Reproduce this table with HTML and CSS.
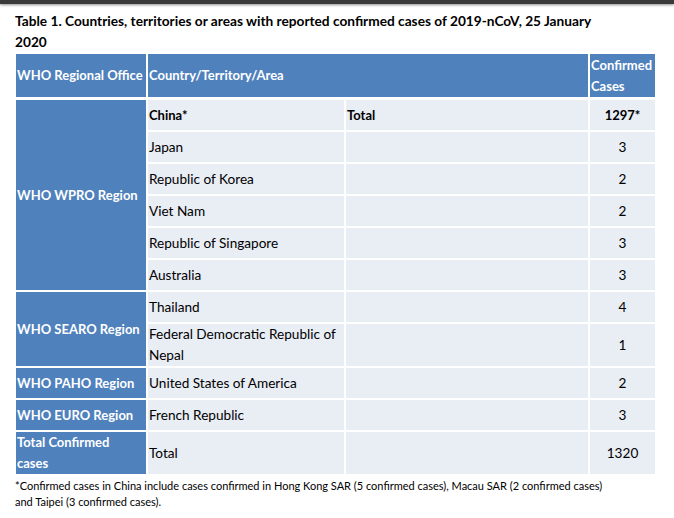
FILE: index.html
```html
<!DOCTYPE html>
<html>
<head>
<meta charset="utf-8">
<link rel="stylesheet" href="styles.css">
</head>
<body>
<div class="topbar"></div>
<div class="page">
  <h1 class="title">Table 1. Countries, territories or areas with reported confirmed cases of 2019-nCoV, 25 January<br>2020</h1>
  <table class="cases">
    <colgroup>
      <col class="c1"><col class="c2"><col class="c3"><col class="c4">
    </colgroup>
    <thead>
      <tr>
        <th class="head">WHO Regional Office</th>
        <th class="head" colspan="2">Country/Territory/Area</th>
        <th class="head">Confirmed Cases</th>
      </tr>
    </thead>
    <tbody>
      <tr>
        <td class="region" rowspan="6">WHO WPRO Region</td>
        <td class="cell bold">China*</td>
        <td class="cell bold">Total</td>
        <td class="cell num bold">1297*</td>
      </tr>
      <tr><td class="cell">Japan</td><td class="cell"></td><td class="cell num">3</td></tr>
      <tr><td class="cell">Republic of Korea</td><td class="cell"></td><td class="cell num">2</td></tr>
      <tr><td class="cell">Viet Nam</td><td class="cell"></td><td class="cell num">2</td></tr>
      <tr><td class="cell">Republic of Singapore</td><td class="cell"></td><td class="cell num">3</td></tr>
      <tr><td class="cell">Australia</td><td class="cell"></td><td class="cell num">3</td></tr>
      <tr>
        <td class="region" rowspan="2">WHO SEARO Region</td>
        <td class="cell">Thailand</td><td class="cell"></td><td class="cell num">4</td>
      </tr>
      <tr><td class="cell">Federal Democratic Republic of Nepal</td><td class="cell"></td><td class="cell num">1</td></tr>
      <tr>
        <td class="region">WHO PAHO Region</td>
        <td class="cell">United States of America</td><td class="cell"></td><td class="cell num">2</td>
      </tr>
      <tr>
        <td class="region">WHO EURO Region</td>
        <td class="cell">French Republic</td><td class="cell"></td><td class="cell num">3</td>
      </tr>
      <tr>
        <td class="region">Total Confirmed<br>cases</td>
        <td class="cell">Total</td><td class="cell"></td><td class="cell num">1320</td>
      </tr>
    </tbody>
  </table>
  <p class="note">*Confirmed cases in China include cases confirmed in Hong Kong SAR (5 confirmed cases), Macau SAR (2 confirmed cases) and Taipei (3 confirmed cases).</p>
</div>
</body>
</html>
```

FILE: styles.css
```css
html, body {
  margin: 0;
  padding: 0;
  background: #ffffff;
}

body {
  font-family: "Lato", "Open Sans", sans-serif;
  color: #000000;
}

.topbar {
  height: 4px;
  background: #3a3a3a;
  box-shadow: 0 1px 3px rgba(0, 0, 0, 0.45);
}

.page {
  padding: 6px 0 0 15px;
}

.title {
  margin: 0 0 2px 0;
  font-size: 13.7px;
  font-weight: 700;
  line-height: 21px;
}

.cases {
  margin-left: 1px;
  border-collapse: separate;
  border-spacing: 0;
  table-layout: fixed;
  width: 641px;
  font-size: 13.6px;
  line-height: 21px;
}

.c1 { width: 132px; }
.c2 { width: 198px; }
.c3 { width: 244px; }
.c4 { width: 67px; }

.head {
  background: #4f81bd;
  color: #ffffff;
  font-size: 13px;
  font-weight: 700;
  text-align: left;
  vertical-align: middle;
  height: 43px;
  padding: 0 0 0 1px;
  border-right: 2px solid #ffffff;
  border-bottom: 3px solid #ffffff;
}

.region {
  background: #4f81bd;
  color: #ffffff;
  font-size: 13px;
  font-weight: 700;
  vertical-align: middle;
  height: 30px;
  padding: 0 0 0 1px;
  border-right: 2px solid #ffffff;
  border-bottom: 2px solid #ffffff;
}

.cell {
  background: #e9edf4;
  vertical-align: middle;
  height: 30px;
  padding: 0 1px;
  border-right: 2px solid #ffffff;
  border-bottom: 2px solid #ffffff;
}

.bold {
  font-size: 13px;
  font-weight: 700;
}

.num {
  text-align: center;
}

.note {
  margin: 2px 0 0 0;
  font-size: 11px;
  line-height: 16px;
  width: 600px;
}
```
